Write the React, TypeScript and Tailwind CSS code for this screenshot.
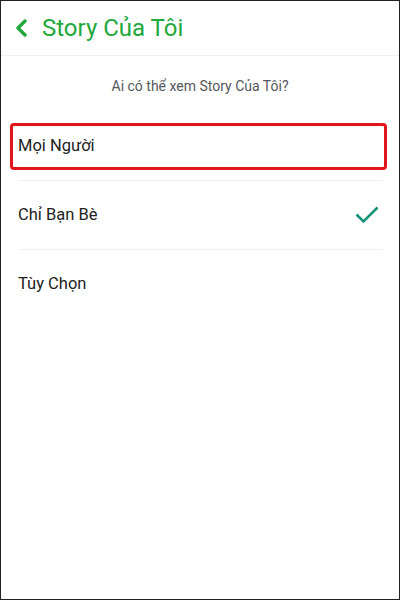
const options = [
  { label: "Mọi Người", highlighted: true, checked: false },
  { label: "Chỉ Bạn Bè", highlighted: false, checked: true },
  { label: "Tùy Chọn", highlighted: false, checked: false },
];

export default function App() {
  return (
    <div className="h-[600px] w-[400px] overflow-hidden border border-[#222] bg-white font-['Roboto','Noto_Sans',sans-serif]">
      <header className="flex h-[55px] items-center gap-[12px] border-b border-[#f0f0f0] pl-[13px]">
        <svg width="16" height="18" viewBox="0 0 16 18" fill="none">
          <path d="M11 2 L4 9 L11 16" stroke="#22a83c" strokeWidth="3.4" strokeLinecap="round" strokeLinejoin="round" />
        </svg>
        <h1 className="text-[24px] leading-none text-[#22a83c]">Story Của Tôi</h1>
      </header>

      <p className="pt-[20px] text-center text-[14px] text-[#55575c]">Ai có thể xem Story Của Tôi?</p>

      <ul className="mt-[26px] pl-[9px] pr-[12px]">
        {options.map((o, i) => (
          <li key={o.label}>
            {i > 0 && <div className="ml-[8px] mr-[4px] border-t border-[#f0f0f0]" />}
            <div
              className={
                o.highlighted
                  ? "flex h-[47px] items-center justify-between rounded-[4px] border-[3px] border-[#e1141b] pl-[5px] pr-[6px]"
                  : "flex h-[68px] items-center justify-between pl-[8px] pr-[8px]"
              }
            >
              <span className="text-[16.5px] text-[#222]">{o.label}</span>
              {o.checked && (
                <svg width="24" height="18" viewBox="0 0 24 18" fill="none">
                  <path d="M1.5 8.5 L8.5 15.5 L22.5 1.5" stroke="#17937a" strokeWidth="2.6" />
                </svg>
              )}
            </div>
            {o.highlighted && <div className="h-[10px]" />}
          </li>
        ))}
      </ul>
    </div>
  );
}
